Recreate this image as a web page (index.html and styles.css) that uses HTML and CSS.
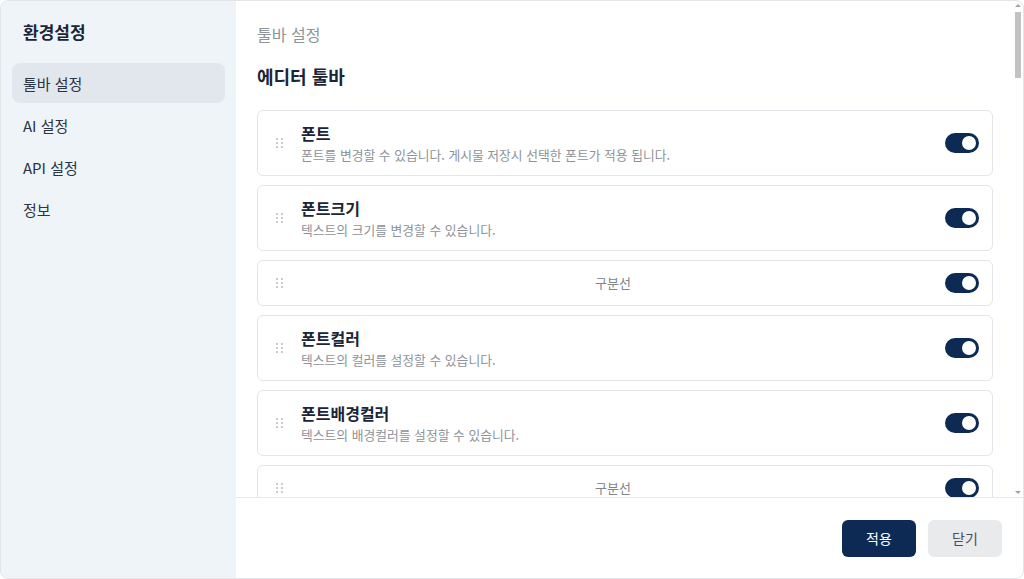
FILE: index.html
```html
<!DOCTYPE html>
<html lang="ko">
<head>
<meta charset="utf-8">
<title>환경설정</title>
<link rel="stylesheet" href="styles.css">
</head>
<body>
<div class="modal">
  <aside class="sidebar">
    <h1 class="side-title">환경설정</h1>
    <nav class="nav">
      <a class="nav-item active">툴바 설정</a>
      <a class="nav-item">AI 설정</a>
      <a class="nav-item">API 설정</a>
      <a class="nav-item">정보</a>
    </nav>
  </aside>
  <section class="main">
    <div class="body">
      <div class="scroll">
        <div class="crumb">툴바 설정</div>
        <h2 class="section-title">에디터 툴바</h2>
        <ul class="list">
          <li class="card">
            <span class="handle"><i></i><i></i><i></i><i></i><i></i><i></i></span>
            <div class="info"><div class="name">폰트</div><div class="desc">폰트를 변경할 수 있습니다. 게시물 저장시 선택한 폰트가 적용 됩니다.</div></div>
            <span class="toggle on"></span>
          </li>
          <li class="card">
            <span class="handle"><i></i><i></i><i></i><i></i><i></i><i></i></span>
            <div class="info"><div class="name">폰트크기</div><div class="desc">텍스트의 크기를 변경할 수 있습니다.</div></div>
            <span class="toggle on"></span>
          </li>
          <li class="card divider">
            <span class="handle"><i></i><i></i><i></i><i></i><i></i><i></i></span>
            <div class="sep">구분선</div>
            <span class="toggle on"></span>
          </li>
          <li class="card">
            <span class="handle"><i></i><i></i><i></i><i></i><i></i><i></i></span>
            <div class="info"><div class="name">폰트컬러</div><div class="desc">텍스트의 컬러를 설정할 수 있습니다.</div></div>
            <span class="toggle on"></span>
          </li>
          <li class="card">
            <span class="handle"><i></i><i></i><i></i><i></i><i></i><i></i></span>
            <div class="info"><div class="name">폰트배경컬러</div><div class="desc">텍스트의 배경컬러를 설정할 수 있습니다.</div></div>
            <span class="toggle on"></span>
          </li>
          <li class="card divider">
            <span class="handle"><i></i><i></i><i></i><i></i><i></i><i></i></span>
            <div class="sep">구분선</div>
            <span class="toggle on"></span>
          </li>
        </ul>
      </div>
      <div class="scrollbar">
        <span class="arrow up"></span>
        <div class="track"><span class="thumb"></span></div>
        <span class="arrow down"></span>
      </div>
    </div>
    <footer class="footer">
      <button class="btn primary">적용</button>
      <button class="btn">닫기</button>
    </footer>
  </section>
</div>
</body>
</html>
```
FILE: styles.css
```css
* { box-sizing: border-box; }
html, body { margin: 0; padding: 0; }
body {
  font-family: "Noto Sans CJK KR", "Noto Sans", sans-serif;
  background: #ffffff;
  color: #1b2638;
}
.modal {
  width: 1024px;
  height: 579px;
  display: flex;
  border: 1px solid #e3e5e9;
  border-radius: 8px;
  overflow: hidden;
  background: #fff;
}
.sidebar {
  width: 235px;
  flex: none;
  background: #eff4f9;
  padding: 19px 11px 0 11px;
}
.side-title {
  margin: 0 0 19px 11px;
  font-size: 17px;
  line-height: 24px;
  font-weight: 700;
  color: #1a2638;
}
.nav { display: flex; flex-direction: column; gap: 2px; }
.nav-item {
  display: flex;
  align-items: center;
  height: 40px;
  padding-left: 11px;
  border-radius: 8px;
  font-size: 15px;
  color: #2b3442;
}
.nav-item.active { background: #e2e7ee; }
.main {
  flex: 1;
  display: flex;
  flex-direction: column;
  min-width: 0;
}
.body {
  flex: 1;
  min-height: 0;
  display: flex;
}
.scroll {
  flex: 1;
  min-width: 0;
  overflow: hidden;
  padding: 23px 20px 0 21px;
}
.scrollbar {
  width: 10px;
  flex: none;
  display: flex;
  flex-direction: column;
  align-items: center;
  padding: 3px 0 3px;
}
.arrow {
  width: 0;
  height: 0;
  border-left: 3px solid transparent;
  border-right: 3px solid transparent;
  flex: none;
}
.arrow.up { border-bottom: 3px solid #a3a3a3; }
.arrow.down { border-top: 3px solid #a3a3a3; }
.track {
  flex: 1;
  width: 100%;
  display: flex;
  justify-content: center;
  padding-top: 5px;
}
.thumb {
  display: block;
  width: 6px;
  height: 66px;
  background: #c2c2c2;
}
.crumb {
  font-size: 16px;
  line-height: 20px;
  color: #8e939b;
}
.section-title {
  margin: 20px 0 22px;
  font-size: 18px;
  line-height: 24px;
  font-weight: 700;
  color: #1a2538;
}
.list {
  list-style: none;
  margin: 0;
  padding: 0 0 20px;
  display: flex;
  flex-direction: column;
  gap: 9px;
}
.card {
  display: flex;
  align-items: center;
  min-height: 66px;
  padding: 0 13px 0 18px;
  border: 1px solid #e2e5e9;
  border-radius: 6px;
  background: #fff;
}
.card.divider { min-height: 46px; }
.handle {
  width: 8px;
  display: grid;
  grid-template-columns: 2px 2px;
  column-gap: 3px;
  row-gap: 2px;
  margin-right: 17px;
  flex: none;
}
.handle i {
  display: block;
  width: 2px;
  height: 2px;
  background: #c9cdd3;
}
.info { flex: 1; min-width: 0; padding-top: 1px; }
.name {
  font-size: 16px;
  line-height: 20px;
  font-weight: 700;
  color: #1a2538;
}
.desc {
  margin-top: 3px;
  font-size: 12.8px;
  line-height: 18px;
  color: #8d929a;
}
.sep {
  flex: 1;
  text-align: center;
  padding-right: 20px;
  font-size: 13px;
  line-height: 18px;
  color: #80858c;
}
.toggle {
  position: relative;
  width: 34px;
  height: 20px;
  border-radius: 10px;
  background: #0c2a53;
  flex: none;
}
.toggle::after {
  content: "";
  position: absolute;
  top: 3px;
  right: 3px;
  width: 14px;
  height: 14px;
  border-radius: 50%;
  background: #fff;
}
.footer {
  flex: none;
  height: 81px;
  border-top: 1px solid #e6e8eb;
  display: flex;
  align-items: center;
  justify-content: flex-end;
  gap: 12px;
  padding-right: 21px;
}
.btn {
  width: 74px;
  height: 37px;
  border: none;
  border-radius: 6px;
  background: #e9eaec;
  color: #4a4f57;
  font-family: inherit;
  font-size: 14px;
}
.btn.primary { background: #0c2a53; color: #fff; }
```
